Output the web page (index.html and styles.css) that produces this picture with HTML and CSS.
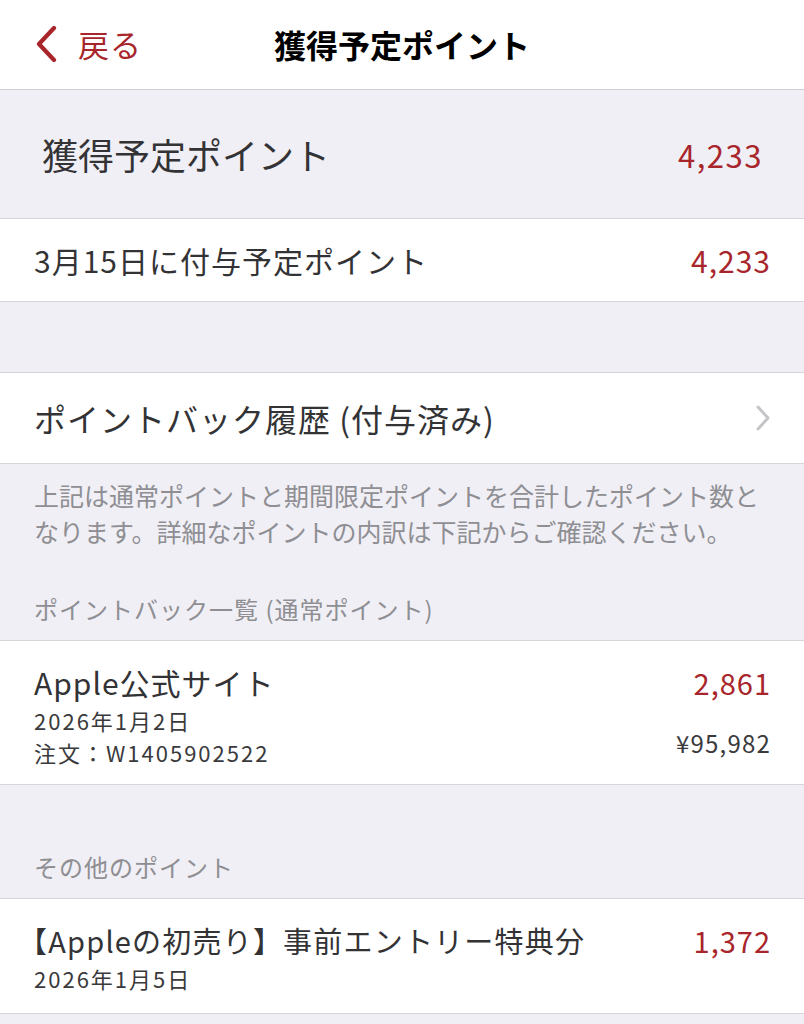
FILE: index.html
```html
<!DOCTYPE html>
<html lang="ja">
<head>
<meta charset="utf-8">
<title>獲得予定ポイント</title>
<link rel="stylesheet" href="styles.css">
</head>
<body>
<header class="navbar">
  <div class="nav-back">
    <svg class="back-icon" width="22" height="36" viewBox="0 0 22 36"><path d="M19 2 L4 18 L19 34" fill="none" stroke="#a8262b" stroke-width="4.2" stroke-linecap="round" stroke-linejoin="round"/></svg>
    <span class="back-label">戻る</span>
  </div>
  <h1 class="nav-title">獲得予定ポイント</h1>
  <div></div>
</header>

<section class="summary">
  <span class="summary-label">獲得予定ポイント</span>
  <span class="summary-value">4,233</span>
</section>

<div class="cell cell-scheduled">
  <span class="cell-label">3月15日に付与予定ポイント</span>
  <span class="cell-value">4,233</span>
</div>

<div class="spacer"></div>

<div class="cell cell-history">
  <span class="cell-label history-label">ポイントバック履歴 (付与済み)</span>
  <svg class="chevron" width="18" height="28" viewBox="0 0 18 28"><path d="M4 3 L14 14 L4 25" fill="none" stroke="#c4c4c9" stroke-width="3" stroke-linecap="round" stroke-linejoin="round"/></svg>
</div>

<p class="note">上記は通常ポイントと期間限定ポイントを合計したポイント数となります。詳細なポイントの内訳は下記からご確認ください。</p>

<h2 class="group-title group-first">ポイントバック一覧 (通常ポイント)</h2>

<div class="entry entry-apple">
  <div class="entry-main">
    <div class="entry-name">Apple公式サイト</div>
    <div class="entry-sub">2026年1月2日</div>
    <div class="entry-sub">注文：W1405902522</div>
  </div>
  <div class="entry-side">
    <div class="entry-points">2,861</div>
    <div class="entry-price">¥95,982</div>
  </div>
</div>

<h2 class="group-title group-other">その他のポイント</h2>

<div class="entry entry-other">
  <div class="entry-main">
    <div class="entry-name name-bracket">【Appleの初売り】事前エントリー特典分</div>
    <div class="entry-sub">2026年1月5日</div>
  </div>
  <div class="entry-side">
    <div class="entry-points">1,372</div>
  </div>
</div>
</body>
</html>
```

FILE: styles.css
```css
* { box-sizing: border-box; }

html, body {
  margin: 0;
  padding: 0;
}

body {
  width: 804px;
  min-height: 1024px;
  background: #f0eff5;
  font-family: "Noto Sans CJK JP", "Noto Sans", sans-serif;
  color: #333336;
}

.navbar {
  height: 90px;
  background: #ffffff;
  border-bottom: 1px solid #cfcfd3;
  display: grid;
  grid-template-columns: 1fr auto 1fr;
  align-items: center;
}

.nav-back {
  display: flex;
  align-items: center;
  gap: 21px;
  padding-left: 35px;
  padding-bottom: 2px;
}

.back-icon { display: block; }

.back-label {
  font-size: 31px;
  line-height: 1;
  letter-spacing: 1px;
  color: #a8262b;
}

.nav-title {
  margin: 0;
  font-size: 32px;
  font-weight: 700;
  line-height: 1;
  color: #000000;
  padding-bottom: 2px;
}

.summary {
  height: 129px;
  display: flex;
  align-items: center;
  justify-content: space-between;
  padding: 0 42px 0 42px;
  border-bottom: 1px solid #d6d6da;
}

.summary-label {
  font-size: 36px;
  line-height: 1;
  color: #333336;
}

.summary-value {
  font-size: 31px;
  line-height: 1;
  letter-spacing: 1.5px;
  margin-right: -1px;
  color: #a8262b;
}

.cell {
  background: #ffffff;
  display: flex;
  align-items: center;
  justify-content: space-between;
  padding: 0 34px;
  border-bottom: 1px solid #d6d6da;
}

.cell-scheduled { height: 83px; }

.cell-history {
  height: 92px;
  border-top: 1px solid #d6d6da;
}

.cell-label {
  font-size: 30px;
  line-height: 1;
  letter-spacing: 1px;
  color: #333336;
}

.history-label {
  font-size: 32px;
}

.cell-value {
  font-size: 30px;
  line-height: 1;
  letter-spacing: 1px;
  margin-right: -1px;
  color: #a8262b;
}

.chevron {
  display: block;
  margin-right: -2px;
}

.spacer { height: 70px; }

.note {
  margin: 0;
  padding: 13px 34px 0 34px;
  font-size: 25px;
  line-height: 36px;
  color: #8e8e93;
}

.group-title {
  margin: 0;
  font-size: 24px;
  font-weight: 400;
  line-height: 1;
  letter-spacing: 1px;
  color: #8e8e93;
  padding: 0 34px;
  border-bottom: 1px solid #d6d6da;
}

.group-first {
  padding-top: 48px;
  padding-bottom: 19px;
}

.group-other {
  padding-top: 70px;
  padding-bottom: 19px;
}

.entry {
  background: #ffffff;
  display: flex;
  justify-content: space-between;
  padding: 0 34px;
  border-bottom: 1px solid #d6d6da;
}

.entry-apple {
  height: 144px;
  padding-top: 19px;
}

.entry-other {
  height: 115px;
  padding-top: 19px;
}

.entry-main {
  display: flex;
  flex-direction: column;
}

.entry-name {
  font-size: 30px;
  line-height: 44px;
  letter-spacing: 1px;
  color: #333336;
}

.name-bracket {
  margin-left: -16px;
  font-size: 29px;
  letter-spacing: 1.2px;
}

.entry-sub {
  font-size: 22px;
  line-height: 32px;
  letter-spacing: 2px;
  color: #3a3a3c;
}

.entry-side {
  display: flex;
  flex-direction: column;
  align-items: flex-end;
  justify-content: space-between;
  margin-right: -1px;
}

.entry-apple .entry-side { padding-bottom: 25px; }

.entry-points {
  font-size: 29px;
  line-height: 44px;
  letter-spacing: 1px;
  color: #a8262b;
}

.entry-price {
  font-size: 24px;
  line-height: 32px;
  letter-spacing: 1.2px;
  color: #3a3a3c;
}
```
